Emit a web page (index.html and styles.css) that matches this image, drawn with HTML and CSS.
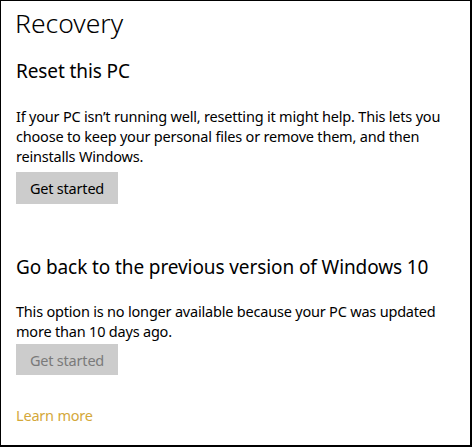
FILE: index.html
```html
<!DOCTYPE html>
<html>
<head>
<meta charset="utf-8">
<link rel="stylesheet" href="styles.css">
</head>
<body>
<div class="frame">
  <h1 class="title">Recovery</h1>
  <section class="section first">
    <h2 class="heading">Reset this PC</h2>
    <p class="text">If your PC isn’t running well, resetting it might help. This lets you choose to keep your personal files or remove them, and then reinstalls Windows.</p>
    <div class="btn">Get started</div>
  </section>
  <section class="section second">
    <h2 class="heading">Go back to the previous version of Windows 10</h2>
    <p class="text">This option is no longer available because your PC was updated more than 10 days ago.</p>
    <div class="btn disabled">Get started</div>
  </section>
  <a class="link">Learn more</a>
</div>
</body>
</html>
```
FILE: styles.css
```css
html, body {
  margin: 0;
  padding: 0;
  background: #fff;
}
.frame {
  box-sizing: border-box;
  width: 472px;
  height: 447px;
  border-style: solid;
  border-color: #000;
  border-width: 1px 2px 2px 1px;
  padding: 0 0 0 15px;
  font-family: "Noto Sans", "Open Sans", sans-serif;
  color: #000;
  display: flex;
  flex-direction: column;
  align-items: flex-start;
}
.title {
  margin: 4px 0 0 -1px;
  font-size: 26.5px;
  font-weight: 300;
  line-height: 36px;
}
.heading {
  margin: 0;
  font-size: 19px;
  font-weight: 400;
  letter-spacing: -0.1px;
  line-height: 28px;
}
.section.first {
  margin-top: 16px;
}
.section.second {
  margin-top: 49px;
}
.text {
  margin: 21px 0 0 0;
  font-size: 14.5px;
  letter-spacing: -0.2px;
  line-height: 20px;
  width: 445px;
}
.section.second .text {
  margin-top: 21px;
  line-height: 19.5px;
}
.btn {
  margin-top: 6px;
  width: 102px;
  height: 32px;
  background: #cccccc;
  display: flex;
  align-items: center;
  justify-content: center;
  font-size: 14.5px;
  letter-spacing: -0.2px;
  color: #000;
}
.section.second .btn {
  margin-top: 3px;
  height: 31px;
}
.btn.disabled {
  color: #7a7a7a;
}
.link {
  margin-top: 30px;
  font-size: 14.5px;
  letter-spacing: -0.2px;
  color: #d4a83a;
  line-height: 20px;
}
```
